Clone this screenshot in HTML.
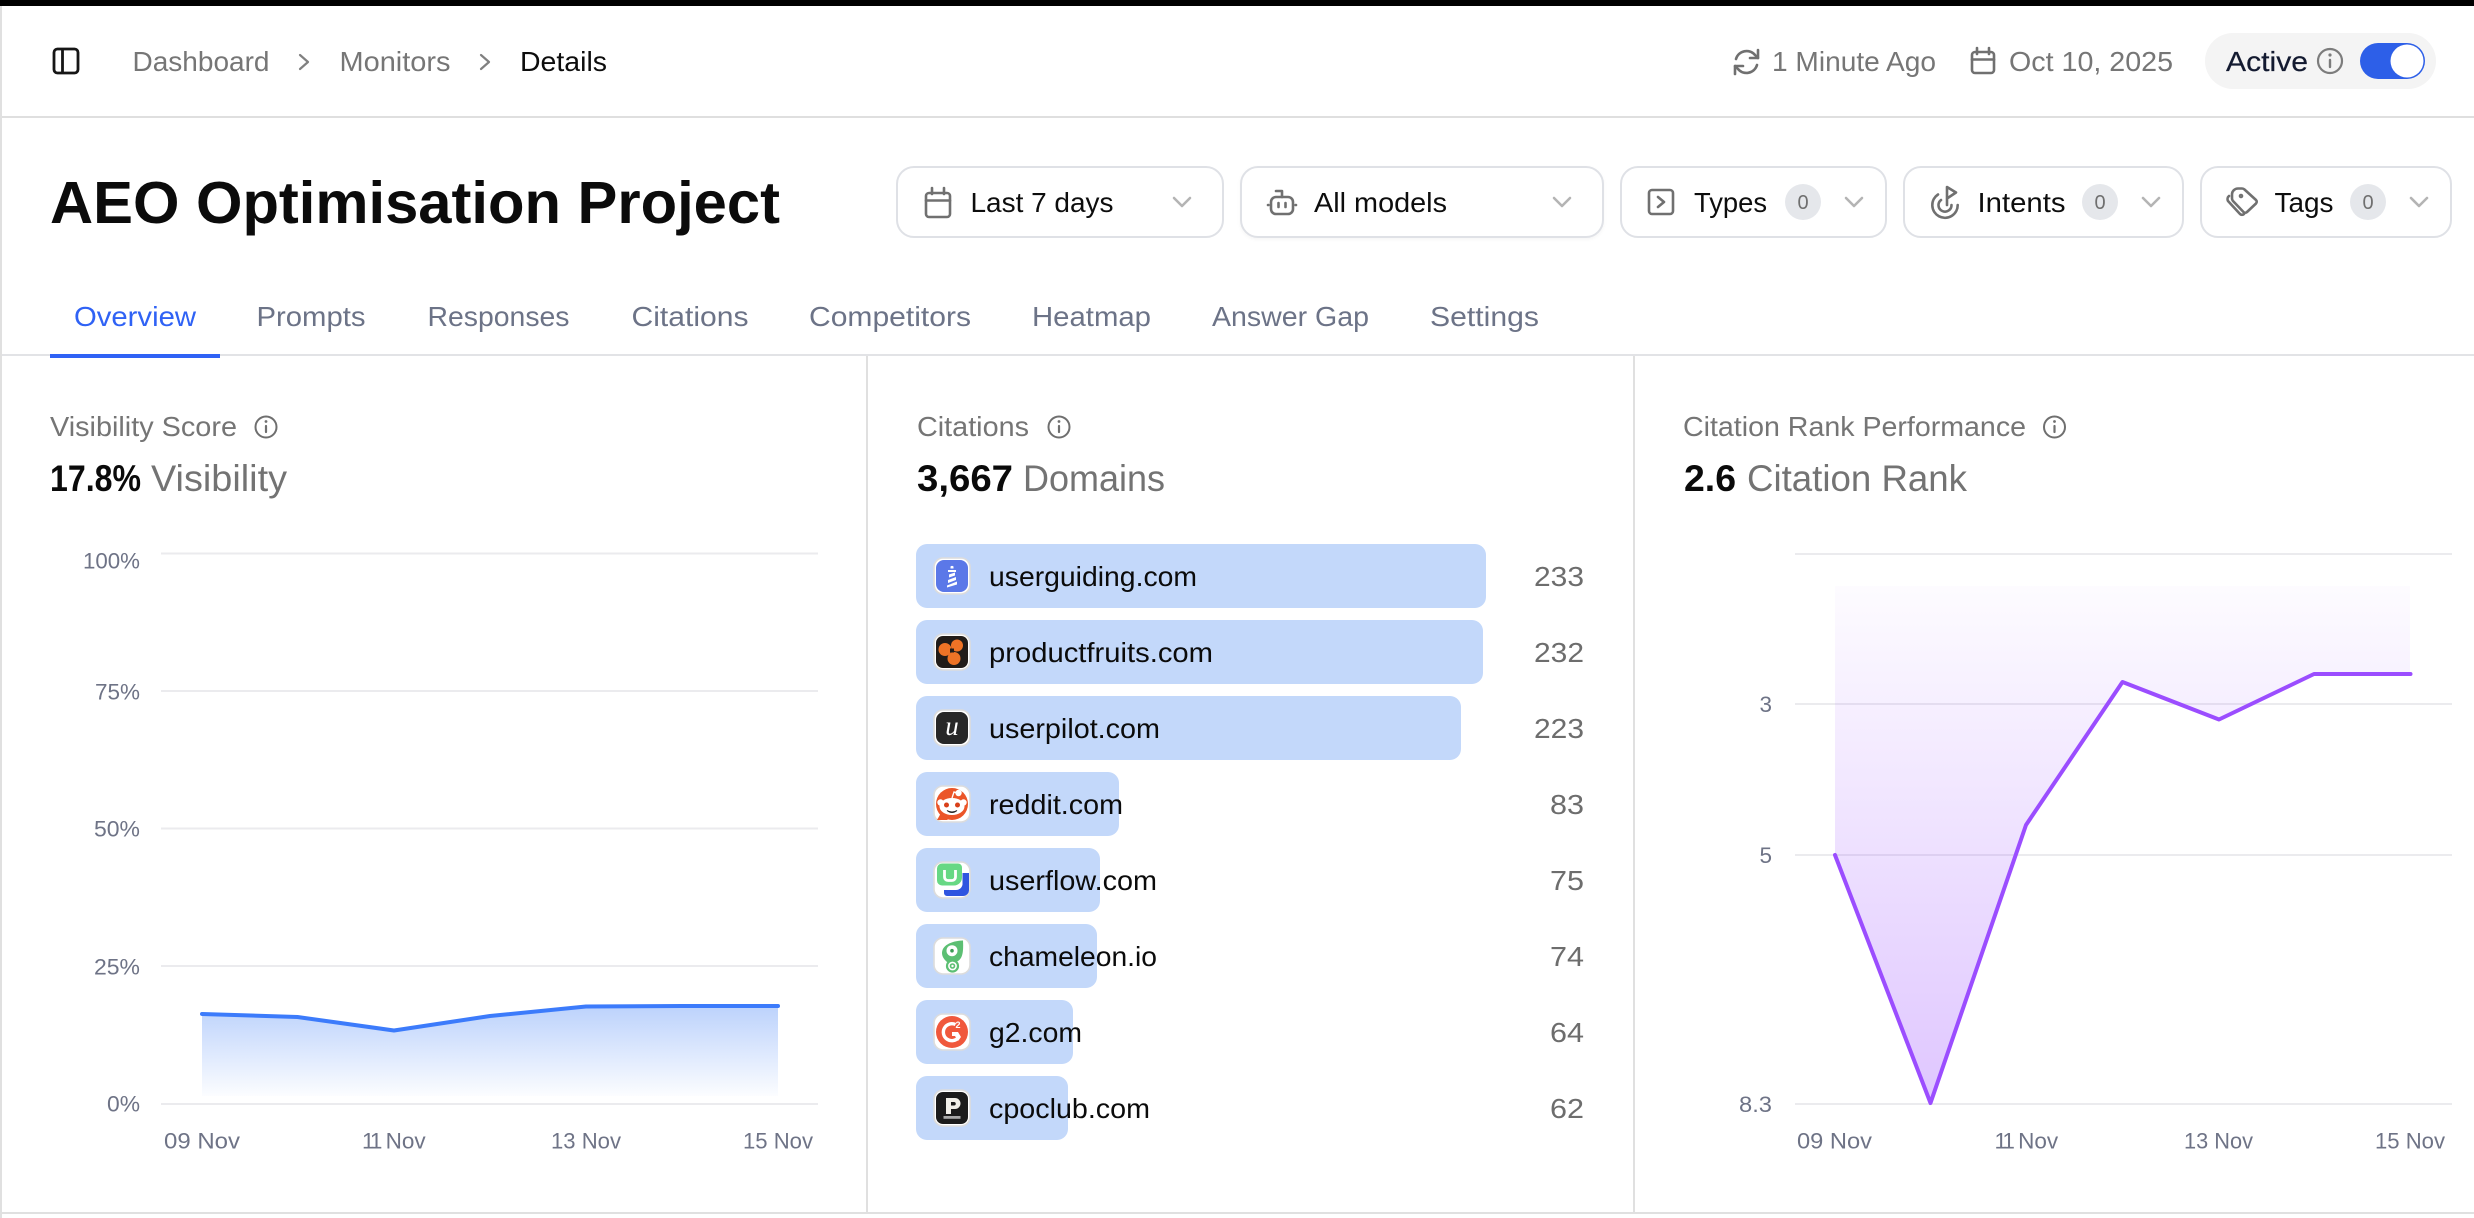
<!DOCTYPE html>
<html lang="en">
<head>
<meta charset="utf-8">
<title>AEO Optimisation Project</title>
<style>
html,body{margin:0;padding:0;background:#fff;width:2474px;height:1218px;overflow:hidden}
svg{display:block}
text{font-family:"Liberation Sans",Arial,sans-serif}
.bc{font-size:27.5px;fill:#767676}
.dark{font-size:27.5px;fill:#0d0d0d}
.tab{font-size:27.5px;fill:#6c7387}
.ct{font-size:27.5px;fill:#757575}
.vb{font-size:37px;font-weight:700;fill:#0a0a0a}
.vs{font-size:37px;fill:#737373}
.ax{font-size:22.5px;fill:#6e7386}
.lb{font-size:27.5px;fill:#0b0b0b}
.nm{font-size:27.5px;fill:#6d6d6d}
.bd{font-size:20px;fill:#6f6f6f}
.ic{fill:none;stroke:#707070;stroke-width:2.6;stroke-linecap:round;stroke-linejoin:round}
.chev{fill:none;stroke:#b4b4b4;stroke-width:2.6;stroke-linecap:round;stroke-linejoin:round}
.btn{fill:#fff;stroke:#dfe1e6;stroke-width:2}
.grid{stroke:#ebebee;stroke-width:2}
.bar{fill:#c3d8fa}
.tile{fill:#fff;stroke:#dcdcdc;stroke-width:1.6}
</style>
</head>
<body>
<svg xmlns="http://www.w3.org/2000/svg" width="2474" height="1218" viewBox="0 0 2474 1218">
<defs>
<linearGradient id="gb" gradientUnits="userSpaceOnUse" x1="0" y1="1006" x2="0" y2="1096"><stop offset="0" stop-color="#bcd2fc"/><stop offset="1" stop-color="#bcd2fc" stop-opacity="0.05"/></linearGradient>
<linearGradient id="gp" gradientUnits="userSpaceOnUse" x1="0" y1="586" x2="0" y2="1104"><stop offset="0" stop-color="#9b4dff" stop-opacity="0.02"/><stop offset="1" stop-color="#9b4dff" stop-opacity="0.32"/></linearGradient>
<filter id="sh" x="-5%" y="-10%" width="110%" height="125%"><feDropShadow dx="0" dy="1.5" stdDeviation="1.5" flood-color="#000" flood-opacity="0.04"/></filter>
</defs>
<rect width="2474" height="1218" fill="#fff"/>
<rect x="0" y="0" width="2474" height="6" fill="#000"/>
<rect x="0" y="6" width="2" height="1212" fill="#e0e0e0"/>
<rect x="2" y="116" width="2472" height="2" fill="#dfdfdf"/>
<rect x="2" y="354" width="2472" height="2" fill="#e2e3e6"/>
<rect x="866" y="356" width="2" height="857" fill="#e0e0e0"/>
<rect x="1633" y="356" width="2" height="857" fill="#e0e0e0"/>
<rect x="2" y="1212" width="2472" height="2" fill="#e0e0e0"/>

<!-- top bar -->
<g fill="none" stroke="#161616" stroke-width="2.8" stroke-linejoin="round"><rect x="54" y="49" width="24" height="24" rx="3.5"/><path d="M62.5 49v24"/></g>
<text class="bc" x="132.500" y="71" textLength="137" lengthAdjust="spacingAndGlyphs">Dashboard</text>
<path d="M300 55l8 7-8 7" fill="none" stroke="#808080" stroke-width="2.2" stroke-linecap="round" stroke-linejoin="round"/>
<text class="bc" x="339.500" y="71" textLength="111" lengthAdjust="spacingAndGlyphs">Monitors</text>
<path d="M481 55l8 7-8 7" fill="none" stroke="#808080" stroke-width="2.2" stroke-linecap="round" stroke-linejoin="round"/>
<text class="dark" x="520" y="71" textLength="87" lengthAdjust="spacingAndGlyphs">Details</text>

<g class="ic" stroke-width="2.4"><path d="M1736 59a11 11 0 0 1 19-4l3 3"/><path d="M1758 50v8h-8"/><path d="M1757 65a11 11 0 0 1-19 4l-3-3"/><path d="M1735 74v-8h8"/></g>
<text class="bc" x="1772" y="71" textLength="164" lengthAdjust="spacingAndGlyphs">1 Minute Ago</text>
<g class="ic" stroke-width="2.4"><rect x="1972" y="52" width="22" height="21" rx="3"/><path d="M1972 59.500h22M1977 48v6M1989 48v6"/></g>
<text class="bc" x="2009" y="71" textLength="164" lengthAdjust="spacingAndGlyphs">Oct 10, 2025</text>
<rect x="2205" y="33" width="231" height="56" rx="28" fill="#f4f4f4"/>
<text x="2226" y="71" font-size="27.500" fill="#131a30" stroke="#131a30" stroke-width=".2" textLength="82" lengthAdjust="spacingAndGlyphs">Active</text>
<circle cx="2330" cy="61" r="12" fill="none" stroke="#7c7c7c" stroke-width="2.2"/><path d="M2330 60v7" stroke="#7c7c7c" stroke-width="2.4" stroke-linecap="round"/><circle cx="2330" cy="55" r="1.6" fill="#7c7c7c"/>
<rect x="2360" y="43" width="65" height="36" rx="18" fill="#2d5fe8"/>
<circle cx="2407" cy="61" r="16.5" fill="#fff"/>

<!-- title -->
<text x="50" y="223" font-size="59" font-weight="700" fill="#0b0b0b" textLength="730" lengthAdjust="spacingAndGlyphs">AEO Optimisation Project</text>

<!-- filters -->
<rect class="btn" x="897" y="167" width="326" height="70" rx="17"/>
<g class="ic"><rect x="926" y="193" width="24" height="24" rx="3"/><path d="M926 200.500h24M932 188v6M944 188v6"/></g>
<text class="dark" x="970.500" y="212" textLength="143" lengthAdjust="spacingAndGlyphs">Last 7 days</text>
<path class="chev" d="M1174 198l8 8 8-8"/>

<rect class="btn" x="1241" y="167" width="362" height="70" rx="17" filter="url(#sh)"/>
<g class="ic" stroke-width="2.800"><rect x="1271" y="197" width="22" height="17" rx="5"/><path d="M1276 191h6v6M1268 205h.5M1295.500 205h.5M1278.500 203v4M1285.500 203v4"/></g>
<text class="dark" x="1314" y="212" textLength="133" lengthAdjust="spacingAndGlyphs">All models</text>
<path class="chev" d="M1554 198l8 8 8-8"/>

<rect class="btn" x="1621" y="167" width="265" height="70" rx="17"/>
<g class="ic"><rect x="1649" y="190" width="24" height="24" rx="3"/><path d="M1658 197l6 5-6 5"/></g>
<text class="dark" x="1694" y="212" textLength="73" lengthAdjust="spacingAndGlyphs">Types</text>
<rect x="1785" y="184" width="36" height="36" rx="18" fill="#e5e7eb"/>
<text class="bd" x="1803" y="209" text-anchor="middle">0</text>
<path class="chev" d="M1846 198l8 8 8-8"/>

<rect class="btn" x="1904" y="167" width="279" height="70" rx="17"/>
<g class="ic"><path d="M1938 194.500a12.700 12.700 0 1 0 19.700 10.500"/><path d="M1941 200a6.500 6.500 0 1 0 10.500 5"/><path d="M1947 205V187l9 5.500-9 6"/></g>
<text class="dark" x="1977.500" y="212" textLength="88" lengthAdjust="spacingAndGlyphs">Intents</text>
<rect x="2082" y="184" width="36" height="36" rx="18" fill="#e5e7eb"/>
<text class="bd" x="2100" y="209" text-anchor="middle">0</text>
<path class="chev" d="M2143 198l8 8 8-8"/>

<rect class="btn" x="2201" y="167" width="250" height="70" rx="17"/>
<g class="ic" stroke-width="2.400"><path d="M2238 188.500h4a4 4 0 0 1 2.500 1l11.500 10.500a2.500 2.500 0 0 1 0 3.500l-9 8.500a2.500 2.500 0 0 1-3.500 0l-10.500-11a4 4 0 0 1-1-2.700v-4.300a6 6 0 0 1 6-5.500z"/><path d="M2229 196a4 4 0 0 0-1 5l12 13a3 3 0 0 0 4 0"/><circle cx="2241" cy="196" r="1"/></g>
<text class="dark" x="2274.500" y="212" textLength="59" lengthAdjust="spacingAndGlyphs">Tags</text>
<rect x="2350" y="184" width="36" height="36" rx="18" fill="#e5e7eb"/>
<text class="bd" x="2368" y="209" text-anchor="middle">0</text>
<path class="chev" d="M2411 198l8 8 8-8"/>

<!-- tabs -->
<text x="74" y="326" font-size="27.500" fill="#2f62f5" textLength="122" lengthAdjust="spacingAndGlyphs">Overview</text>
<rect x="50" y="354" width="170" height="4" fill="#2f62f5"/>
<text class="tab" x="256.500" y="326" textLength="109" lengthAdjust="spacingAndGlyphs">Prompts</text>
<text class="tab" x="427.500" y="326" textLength="142" lengthAdjust="spacingAndGlyphs">Responses</text>
<text class="tab" x="631.500" y="326" textLength="117" lengthAdjust="spacingAndGlyphs">Citations</text>
<text class="tab" x="809" y="326" textLength="162" lengthAdjust="spacingAndGlyphs">Competitors</text>
<text class="tab" x="1032" y="326" textLength="119" lengthAdjust="spacingAndGlyphs">Heatmap</text>
<text class="tab" x="1212" y="326" textLength="157" lengthAdjust="spacingAndGlyphs">Answer Gap</text>
<text class="tab" x="1430" y="326" textLength="109" lengthAdjust="spacingAndGlyphs">Settings</text>

<!-- panel 1 -->
<text class="ct" x="50" y="436" textLength="187" lengthAdjust="spacingAndGlyphs">Visibility Score</text>
<circle cx="266" cy="427" r="10.500" fill="none" stroke="#6f6f6f" stroke-width="2"/><path d="M266 426v6" stroke="#6f6f6f" stroke-width="2.200" stroke-linecap="round"/><circle cx="266" cy="421.500" r="1.400" fill="#6f6f6f"/>
<text class="vb" x="50" y="491" textLength="91" lengthAdjust="spacingAndGlyphs">17.8%</text>
<text class="vs" x="151" y="491" textLength="136" lengthAdjust="spacingAndGlyphs">Visibility</text>
<path class="grid" d="M161 553.500H818M161 691H818M161 828.500H818M161 966H818M161 1104H818"/>
<text class="ax" x="140" y="568.500" text-anchor="end" textLength="57" lengthAdjust="spacingAndGlyphs">100%</text>
<text class="ax" x="140" y="699.500" text-anchor="end" textLength="45" lengthAdjust="spacingAndGlyphs">75%</text>
<text class="ax" x="140" y="836.500" text-anchor="end" textLength="46" lengthAdjust="spacingAndGlyphs">50%</text>
<text class="ax" x="140" y="974.500" text-anchor="end" textLength="46" lengthAdjust="spacingAndGlyphs">25%</text>
<text class="ax" x="140" y="1111.500" text-anchor="end" textLength="33" lengthAdjust="spacingAndGlyphs">0%</text>
<polygon points="202,1014 297.500,1017 394,1030.500 490,1016 586,1006.500 682,1006 778,1006 778,1096 202,1096" fill="url(#gb)"/>
<polyline points="202,1014 297.500,1017 394,1030.500 490,1016 586,1006.500 682,1006 778,1006" fill="none" stroke="#3c7bfb" stroke-width="4" stroke-linecap="round" stroke-linejoin="round"/>
<text class="ax" x="164" y="1148.500" textLength="76" lengthAdjust="spacingAndGlyphs">09 Nov</text>
<text class="ax" x="362" y="1148.500"><tspan letter-spacing="-3">11</tspan> Nov</text>
<text class="ax" x="551" y="1148.500" textLength="70" lengthAdjust="spacingAndGlyphs">13 Nov</text>
<text class="ax" x="743" y="1148.500" textLength="70" lengthAdjust="spacingAndGlyphs">15 Nov</text>

<!-- panel 2 -->
<text class="ct" x="917" y="436" textLength="112" lengthAdjust="spacingAndGlyphs">Citations</text>
<circle cx="1059" cy="427" r="10.500" fill="none" stroke="#6f6f6f" stroke-width="2"/><path d="M1059 426v6" stroke="#6f6f6f" stroke-width="2.200" stroke-linecap="round"/><circle cx="1059" cy="421.500" r="1.400" fill="#6f6f6f"/>
<text class="vb" x="917" y="491" textLength="96" lengthAdjust="spacingAndGlyphs">3,667</text>
<text class="vs" x="1023" y="491" textLength="142" lengthAdjust="spacingAndGlyphs">Domains</text>

<rect class="bar" x="916" y="544" width="570" height="64" rx="11"/>
<rect class="bar" x="916" y="620" width="567" height="64" rx="11"/>
<rect class="bar" x="916" y="696" width="545" height="64" rx="11"/>
<rect class="bar" x="916" y="772" width="203" height="64" rx="11"/>
<rect class="bar" x="916" y="848" width="184" height="64" rx="11"/>
<rect class="bar" x="916" y="924" width="181" height="64" rx="11"/>
<rect class="bar" x="916" y="1000" width="157" height="64" rx="11"/>
<rect class="bar" x="916" y="1076" width="152" height="64" rx="11"/>

<!-- favicons -->
<g transform="translate(934,558)"><rect class="tile" width="36" height="36" rx="9"/><rect x="2" y="2" width="32" height="32" rx="8" fill="#5b78e8"/><path d="M16.500 8.500a2 2 0 0 1 3 0v2h-3zM14 12h8v2h-8zM15 16.500l6-2v3l-6 2zM14 22l8-3v3l-8 3zM13 27.500l10-4v3l-10 3z" fill="#fff"/></g>
<g transform="translate(934,634)"><rect class="tile" width="36" height="36" rx="9"/><rect x="2" y="2" width="32" height="32" rx="7" fill="#211c19"/><circle cx="11" cy="15.500" r="6.500" fill="#ee7326"/><circle cx="23" cy="11.500" r="6" fill="#ee7326"/><circle cx="20" cy="24.500" r="6.500" fill="#ee7326"/><rect x="16" y="14.500" width="4" height="4" fill="#211c19"/></g>
<g transform="translate(934,710)"><rect class="tile" width="36" height="36" rx="9"/><rect x="2" y="2" width="32" height="32" rx="8" fill="#272727"/><text x="18" y="25" text-anchor="middle" font-size="27" font-style="italic" fill="#fff" style="font-family:'Liberation Serif',serif">u</text></g>
<g transform="translate(934,786)"><rect class="tile" width="36" height="36" rx="9"/><circle cx="18" cy="18" r="16" fill="#eb5528"/><path d="M3 34l4-7 7 7z" fill="#eb5528"/><ellipse cx="18" cy="20.500" rx="12.500" ry="8.500" fill="#fff"/><circle cx="6.500" cy="16.500" r="3.200" fill="#fff"/><circle cx="29.500" cy="16.500" r="3.200" fill="#fff"/><circle cx="12.500" cy="19" r="2.500" fill="#d9401a"/><circle cx="23.500" cy="19" r="2.500" fill="#d9401a"/><path d="M13 24.500q5 3 10 0q-5 4-10 0" fill="#222" stroke="#222" stroke-width="1"/><circle cx="24.500" cy="7" r="3.200" fill="#fff"/><path d="M18 12l2-6 3 1" fill="none" stroke="#fff" stroke-width="1.300"/></g>
<g transform="translate(934,862)"><rect class="tile" width="36" height="36" rx="9"/><path d="M8 1.500h16a4 4 0 0 1 4 4v10a8 8 0 0 1-8 8H8a5 5 0 0 1-5-5V6.500a5 5 0 0 1 5-5z" fill="#67d884"/><path d="M10.500 8v7a3.500 3.500 0 0 0 3.500 3.500h4a3.500 3.500 0 0 0 3.500-3.500V8" fill="none" stroke="#fff" stroke-width="2.800"/><path d="M28.500 11H35v17a6 6 0 0 1-6 6H13a3 3 0 0 1-3-3v-3h12a6.500 6.500 0 0 0 6.500-5.500z" fill="#2f55e0"/></g>
<g transform="translate(934,938)"><rect class="tile" width="36" height="36" rx="9"/><path d="M29 2.500C29.500 12 29 20 24 23l-2 1H13C9.500 21 8 18 8 15 8 8 16 3 29 2.500z" fill="#5cbf73"/><circle cx="18" cy="12.700" r="5.500" fill="#fff"/><circle cx="18" cy="12.700" r="1.800" fill="#3b9c55"/><circle cx="18.500" cy="28" r="5.500" fill="#fff" stroke="#5cbf73" stroke-width="2.200"/><circle cx="18.500" cy="28" r="2" fill="none" stroke="#5cbf73" stroke-width="1.600"/></g>
<g transform="translate(934,1014)"><rect class="tile" width="36" height="36" rx="9"/><circle cx="18" cy="18" r="16" fill="#f0583c"/><path d="M21.500 10.500a8.500 8.500 0 1 0 3 13" fill="none" stroke="#fff" stroke-width="3.400"/><path d="M18 18h6l3 5-3 4-3-5h-3z" fill="#fff"/><text x="24" y="14" font-size="9" font-weight="700" fill="#fff" text-anchor="middle">2</text></g>
<g transform="translate(934,1090)"><rect class="tile" width="36" height="36" rx="9"/><rect x="2" y="2" width="32" height="32" rx="7" fill="#1b1b1b"/><path d="M12 8h9a5.500 5.500 0 0 1 0 11h-4v5h-5zM17 12v3.500h3a1.700 1.700 0 0 0 0-3.500z" fill="#f1efe9" fill-rule="evenodd"/><rect x="9.500" y="26" width="17" height="2.800" fill="#a8a8a8"/></g>

<text class="lb" x="989" y="586" textLength="208" lengthAdjust="spacingAndGlyphs">userguiding.com</text>
<text class="lb" x="989" y="662" textLength="224" lengthAdjust="spacingAndGlyphs">productfruits.com</text>
<text class="lb" x="989" y="738" textLength="171" lengthAdjust="spacingAndGlyphs">userpilot.com</text>
<text class="lb" x="989" y="814" textLength="134" lengthAdjust="spacingAndGlyphs">reddit.com</text>
<text class="lb" x="989" y="890" textLength="168" lengthAdjust="spacingAndGlyphs">userflow.com</text>
<text class="lb" x="989" y="966" textLength="168" lengthAdjust="spacingAndGlyphs">chameleon.io</text>
<text class="lb" x="989" y="1042" textLength="93" lengthAdjust="spacingAndGlyphs">g2.com</text>
<text class="lb" x="989" y="1118" textLength="161" lengthAdjust="spacingAndGlyphs">cpoclub.com</text>

<text class="nm" x="1584" y="586" text-anchor="end" textLength="50" lengthAdjust="spacingAndGlyphs">233</text>
<text class="nm" x="1584" y="662" text-anchor="end" textLength="50" lengthAdjust="spacingAndGlyphs">232</text>
<text class="nm" x="1584" y="738" text-anchor="end" textLength="50" lengthAdjust="spacingAndGlyphs">223</text>
<text class="nm" x="1584" y="814" text-anchor="end" textLength="34" lengthAdjust="spacingAndGlyphs">83</text>
<text class="nm" x="1584" y="890" text-anchor="end" textLength="34" lengthAdjust="spacingAndGlyphs">75</text>
<text class="nm" x="1584" y="966" text-anchor="end" textLength="34" lengthAdjust="spacingAndGlyphs">74</text>
<text class="nm" x="1584" y="1042" text-anchor="end" textLength="34" lengthAdjust="spacingAndGlyphs">64</text>
<text class="nm" x="1584" y="1118" text-anchor="end" textLength="34" lengthAdjust="spacingAndGlyphs">62</text>

<!-- panel 3 -->
<text class="ct" x="1683" y="436" textLength="343" lengthAdjust="spacingAndGlyphs">Citation Rank Performance</text>
<circle cx="2054.500" cy="427" r="10.500" fill="none" stroke="#6f6f6f" stroke-width="2"/><path d="M2054.500 426v6" stroke="#6f6f6f" stroke-width="2.200" stroke-linecap="round"/><circle cx="2054.500" cy="421.500" r="1.400" fill="#6f6f6f"/>
<text class="vb" x="1684" y="491" textLength="52" lengthAdjust="spacingAndGlyphs">2.6</text>
<text class="vs" x="1747" y="491" textLength="220" lengthAdjust="spacingAndGlyphs">Citation Rank</text>
<path class="grid" d="M1795 554H2452M1795 704H2452M1795 855H2452M1795 1104H2452"/>
<text class="ax" x="1772" y="712" text-anchor="end">3</text>
<text class="ax" x="1772" y="863" text-anchor="end">5</text>
<text class="ax" x="1772" y="1112" text-anchor="end" textLength="33" lengthAdjust="spacingAndGlyphs">8.3</text>
<polygon points="1835,586 2410,586 2410,674 2314,674 2219,719.500 2122.500,682 2026,825 1930.500,1104 1835,855" fill="url(#gp)"/>
<polyline points="1835,855 1930.500,1103 2026,825 2122.500,682 2219,719.500 2314,674 2410.500,674" fill="none" stroke="#9b4dff" stroke-width="4" stroke-linecap="round" stroke-linejoin="round"/>
<text class="ax" x="1797" y="1148.500" textLength="75" lengthAdjust="spacingAndGlyphs">09 Nov</text>
<text class="ax" x="1994.500" y="1148.500"><tspan letter-spacing="-3">11</tspan> Nov</text>
<text class="ax" x="2184" y="1148.500" textLength="69" lengthAdjust="spacingAndGlyphs">13 Nov</text>
<text class="ax" x="2375" y="1148.500" textLength="70" lengthAdjust="spacingAndGlyphs">15 Nov</text>
</svg>
</body>
</html>
